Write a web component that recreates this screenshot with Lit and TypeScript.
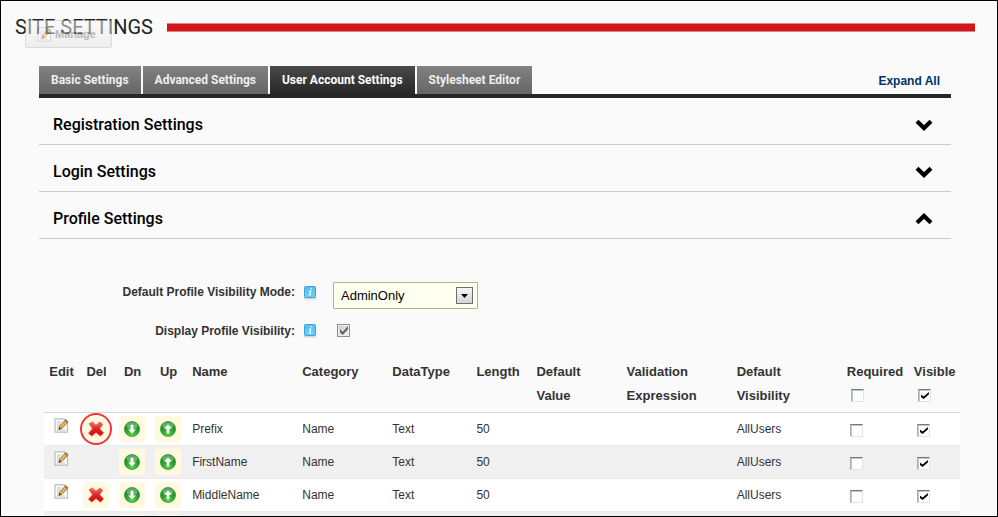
import { LitElement, html, css, svg, nothing } from "lit";
import { customElement, state } from "lit/decorators.js";

interface ProfileField {
  name: string;
  category: string;
  type: string;
  length: string;
  visibility: string;
  deletable: boolean;
  marked?: boolean;
}

const FIELDS: ProfileField[] = [
  { name: "Prefix", category: "Name", type: "Text", length: "50", visibility: "AllUsers", deletable: true, marked: true },
  { name: "FirstName", category: "Name", type: "Text", length: "50", visibility: "AllUsers", deletable: false },
  { name: "MiddleName", category: "Name", type: "Text", length: "50", visibility: "AllUsers", deletable: true },
  { name: "", category: "", type: "", length: "", visibility: "", deletable: false },
];

const TABS = ["Basic Settings", "Advanced Settings", "User Account Settings", "Stylesheet Editor"];

const pencilIcon = html`<svg width="15" height="15" viewBox="0 0 15 15" aria-hidden="true">
  <path d="M1 .8h9.2l3.3 3v10.4H1z" fill="#fbfbfb" stroke="#b9bcc0" stroke-width="1.2" />
  <path d="M3 4h4.5M3 6h3.5M3 8h2.5M3 10h1.5M3 12h8" stroke="#bcc2ca" fill="none" />
  <path d="M4.8 11.4l1-3.4 5.9-6.4 2.4 2.2-6 6.5z" fill="#e5b548" stroke="#86652a" stroke-width=".8" />
  <path d="M4.8 11.4l.7-2.4 1.7 1.6z" fill="#333" />
  <path d="M10.5 2.9l1.2-1.3 2.4 2.2-1.2 1.3z" fill="#8d8468" />
</svg>`;

const crossIcon = html`<svg width="18" height="18" viewBox="0 0 18 18" aria-hidden="true">
  <defs>
    <linearGradient id="r" x1="0" y1="0" x2="0" y2="1">
      <stop offset="0" stop-color="#f4786f" />
      <stop offset=".5" stop-color="#e3201f" />
      <stop offset="1" stop-color="#d8090c" />
    </linearGradient>
  </defs>
  <path
    d="M2.2 3.7L5.4 1.9 9 5.3l3.7-3.2 3 2.2-3.1 4.4 4 4.2-3.2 3.1L9 12.5l-4.2 3.6-3.3-2.8 4-4.6z"
    fill="url(#r)" stroke="#d4413c" stroke-width=".7" stroke-linejoin="round" />
</svg>`;

const arrowIcon = (up: boolean) => html`<svg width="16" height="16" viewBox="0 0 16 16" aria-hidden="true">
  <defs>
    <radialGradient id="g" cx=".5" cy=".85" r=".8">
      <stop offset="0" stop-color="#5fd04a" />
      <stop offset=".5" stop-color="#2ba52b" />
      <stop offset="1" stop-color="#188023" />
    </radialGradient>
  </defs>
  <circle cx="8" cy="8" r="7.6" fill="url(#g)" stroke="#258a2b" stroke-width=".6" />
  <ellipse cx="8" cy="4.6" rx="5.6" ry="3.6" fill="#fff" opacity=".3" />
  ${up
    ? svg`<path d="M8 3.4l3.9 4H9.4v4.8H6.6V7.4H4.1z" fill="#fff" />`
    : svg`<path d="M8 12.6l3.9-4H9.4V3.8H6.6v4.8H4.1z" fill="#fff" />`}
</svg>`;

const infoIcon = html`<svg width="14" height="15" viewBox="0 0 14 15" aria-hidden="true">
  <defs>
    <linearGradient id="b" x1="0" y1="0" x2="0" y2="1">
      <stop offset="0" stop-color="#5bbcf0" />
      <stop offset="1" stop-color="#6bd0f5" />
    </linearGradient>
  </defs>
  <rect x="1" y="12" width="12" height="2.6" rx="1" fill="#c9cccf" opacity=".8" />
  <rect x="1.5" y="1.5" width="11" height="11" rx="1" fill="url(#b)" stroke="#3aa2dd" />
  <path d="M7.6 3.6h1.2M6.2 6h1.5L6.8 10M5.8 10h2.1" stroke="#fff" stroke-width="1.2" fill="none" />
</svg>`;

const chevron = (up: boolean) => html`<svg width="18" height="12" viewBox="0 0 18 12" aria-hidden="true">
  <path d=${up ? "M2 9.7L9 3l7 6.7" : "M2 2.3L9 9l7-6.7"} fill="none" stroke="#000" stroke-width="4.2" />
</svg>`;

@customElement("app-root")
export class AppRoot extends LitElement {
  @state() private tab = 2;
  @state() private open = [false, false, true];

  static styles = css`
    :host {
      display: block;
      box-sizing: border-box;
      height: 100vh;
      overflow: hidden;
      border: 1px solid #000;
      background: #fafafa;
      color: #333;
      font: 12px/24px "Liberation Sans", Arial, sans-serif;
    }
    *, *::before, *::after { box-sizing: border-box; }
    button { font: inherit; color: inherit; margin: 0; padding: 0; border: 0; background: none; cursor: pointer; }
    svg { display: block; }
    .header {
      position: relative;
      display: flex;
      align-items: center;
      gap: 14px;
      height: 52px;
      padding: 0 22px 0 14px;
    }
    h1 { margin: 0; font: 400 20px/24px Roboto, sans-serif; color: #222; white-space: nowrap; }
    .rule { flex: 1; height: 9px; background: #d1171b; border: solid #e87f80; border-width: 1px 0; }
    .manage {
      position: absolute;
      left: 24px;
      top: 19px;
      display: flex;
      align-items: center;
      gap: 3px;
      width: 87px;
      height: 28px;
      padding-left: 11px;
      border: 1px solid #bbb;
      border-radius: 2px;
      background: linear-gradient(#fafafa, #e2e2e2);
      color: #777;
      font-weight: bold;
      font-size: 11px;
      opacity: .5;
    }
    .panel { margin: 13px 46px 0 38px; }
    .tabbar {
      display: flex;
      align-items: flex-end;
      gap: 2px;
      height: 32px;
      border-bottom: 4px solid #272727;
    }
    .tab {
      height: 28px;
      padding: 0 12px;
      background: linear-gradient(#818181, #666);
      color: #eee;
      font: bold 12px/28px Roboto, sans-serif;
      white-space: nowrap;
    }
    .tab.active { background: linear-gradient(#4a4a4a, #272727); color: #fff; }
    .expand { margin-left: auto; padding-right: 11px; color: #003366; font-weight: bold; text-decoration: none; line-height: 26px; }
    h2 { margin: 0; }
    .section {
      display: flex;
      align-items: center;
      justify-content: space-between;
      width: 100%;
      height: 47px;
      padding: 8px 18px 0 14px;
      border-bottom: 1px solid #ccc;
      color: #000;
      font: 500 16px/24px Roboto, sans-serif;
    }
    .form {
      display: grid;
      grid-template-columns: 258px 14px 1fr;
      column-gap: 7px;
      align-items: center;
      padding: 43px 0 0 37px;
    }
    .form label { text-align: right; font-weight: bold; padding-right: 1px; line-height: 20px; }
    .form .raised { align-self: start; }
    .info.raised { padding-top: 3px; }
    .pick { position: relative; width: 145px; margin-left: 9px; }
    select {
      display: block;
      appearance: none;
      width: 100%;
      height: 27px;
      padding: 0 24px 0 7px;
      border: 1px solid #b9b087;
      border-radius: 1px;
      background: #fffff0;
      color: #000;
      font: 13px/24px "Liberation Sans", Arial, sans-serif;
    }
    .drop {
      position: absolute;
      right: 5px;
      top: 5px;
      width: 17px;
      height: 17px;
      border: 1px solid #6e6e78;
      background: linear-gradient(#f6f6f6, #d4d4d4);
      pointer-events: none;
    }
    .show { display: flex; align-items: center; height: 43px; padding-left: 13px; }
    input {
      appearance: none;
      display: block;
      position: relative;
      width: 13px;
      height: 13px;
      margin: 0;
      border: 1px solid;
      border-color: #777 #e3e3e3 #e3e3e3 #bfa99a;
      background: #fff;
      box-shadow: inset 1px 1px 0 #b8c8dc;
    }
    input:checked::before {
      content: "";
      position: absolute;
      left: 2px;
      top: 2px;
      width: 8px;
      height: 7px;
      background: #000;
      clip-path: polygon(0 35%, 35% 65%, 100% 0, 100% 35%, 35% 100%, 0 70%);
    }
    input:disabled { border-color: #8e8f8f; background: linear-gradient(135deg, #ccc, #f2f2f2); box-shadow: inset 0 0 0 1px #f0f0f0; }
    input:disabled:checked::before { background: #666; top: 1px; height: 9px; }
    .grid { margin: 8px 37px 0 43px; }
    table { width: 100%; border-collapse: separate; border-spacing: 0; table-layout: fixed; }
    th, td { padding: 0 0 0 6px; text-align: left; vertical-align: middle; }
    th { height: 53px; font-size: 13px; line-height: 24px; vertical-align: top; border-bottom: 1px solid #d8d8d8; white-space: nowrap; }
    td { height: 33px; border-bottom: 1px solid #ececec; background: #fff; }
    tr:nth-child(even) td { background: #f0f0f0; }
    th.icon { padding: 0 0 0 1px; text-align: center; }
    td.icon { padding: 0; }
    td.edit { vertical-align: top; padding-top: 5px; }
    .edit button, .tile { display: flex; align-items: center; justify-content: center; margin: 0 auto; }
    .tile { position: relative; width: 26px; height: 26px; border-radius: 3px; background: #fff9e0; }
    .marked::after {
      content: "";
      position: absolute;
      left: -3px;
      top: -3px;
      width: 32px;
      height: 32px;
      border: 2px solid #f0353b;
      border-radius: 50%;
    }
    td input { margin: 3px 0 0 3px; }
    th input { margin: 5px 0 0 4px; }
    th label { display: block; }
    .c34 { width: 34px; } .c36 { width: 36px; } .c52 { width: 52px; } .c60 { width: 60px; }
    .c67 { width: 67px; } .c84 { width: 84px; } .c90 { width: 90px; } .c110 { width: 110px; }
  `;

  private toggle(i: number) {
    this.open = this.open.map((o, n) => (n === i ? !o : o));
  }

  private section(i: number, title: string) {
    return html`<h2>
      <button class="section" aria-expanded=${this.open[i]} @click=${() => this.toggle(i)}>
        ${title}${chevron(this.open[i])}
      </button>
    </h2>`;
  }

  private row(f: ProfileField) {
    return html`<tr>
      <td class="icon edit"><button aria-label="Edit ${f.name}">${pencilIcon}</button></td>
      <td class="icon">
        ${f.deletable
          ? html`<button class="tile ${f.marked ? "marked" : ""}" aria-label="Delete ${f.name}">${crossIcon}</button>`
          : nothing}
      </td>
      <td class="icon"><button class="tile" aria-label="Move ${f.name} down">${arrowIcon(false)}</button></td>
      <td class="icon"><button class="tile" aria-label="Move ${f.name} up">${arrowIcon(true)}</button></td>
      <td>${f.name}</td>
      <td>${f.category}</td>
      <td>${f.type}</td>
      <td>${f.length}</td>
      <td></td>
      <td></td>
      <td>${f.visibility}</td>
      <td><input type="checkbox" aria-label="${f.name} required" /></td>
      <td><input type="checkbox" checked aria-label="${f.name} visible" /></td>
    </tr>`;
  }

  private profile() {
    return html`
      <div class="form">
        <label class="raised" for="mode">Default Profile Visibility Mode:</label>
        <button class="info raised" aria-label="Help on visibility mode">${infoIcon}</button>
        <div class="pick">
          <select id="mode">
            <option>AdminOnly</option>
            <option>AllUsers</option>
            <option>MembersOnly</option>
          </select>
          <span class="drop"><svg width="15" height="15" viewBox="0 0 15 15"><path d="M4 6h7l-3.5 4z" fill="#000" /></svg></span>
        </div>
        <label for="display">Display Profile Visibility:</label>
        <button class="info" aria-label="Help on display">${infoIcon}</button>
        <div class="show"><input id="display" type="checkbox" checked disabled /></div>
      </div>
    `;
  }

  private table() {
    return html`<div class="grid">
      <table>
        <colgroup>
          <col class="c34" /><col class="c36" /><col class="c36" /><col class="c36" />
          <col class="c110" /><col class="c90" /><col class="c84" /><col class="c60" />
          <col class="c90" /><col class="c110" /><col class="c110" /><col class="c67" /><col class="c52" />
        </colgroup>
        <thead>
          <tr>
            <th class="icon">Edit</th>
            <th class="icon">Del</th>
            <th class="icon">Dn</th>
            <th class="icon">Up</th>
            <th>Name</th>
            <th>Category</th>
            <th>DataType</th>
            <th>Length</th>
            <th>Default<br />Value</th>
            <th>Validation<br />Expression</th>
            <th>Default<br />Visibility</th>
            <th><label for="req">Required</label><input id="req" type="checkbox" /></th>
            <th><label for="vis">Visible</label><input id="vis" type="checkbox" checked /></th>
          </tr>
        </thead>
        <tbody>
          ${FIELDS.map((f) => this.row(f))}
        </tbody>
      </table>
    </div>`;
  }

  render() {
    return html`
      <header class="header">
        <h1>SITE SETTINGS</h1>
        <div class="rule"></div>
        <button class="manage">${pencilIcon}Manage</button>
      </header>
      <div class="panel">
        <div class="tabbar" role="tablist">
          ${TABS.map(
            (t, i) => html`<button
              role="tab"
              class="tab ${i === this.tab ? "active" : ""}"
              aria-selected=${i === this.tab}
              @click=${() => (this.tab = i)}
            >${t}</button>`
          )}
          <a class="expand" href="#expand">Expand All</a>
        </div>
        ${this.section(0, "Registration Settings")}
        ${this.section(1, "Login Settings")}
        ${this.section(2, "Profile Settings")}
      </div>
      ${this.open[2] ? html`${this.profile()}${this.table()}` : nothing}
    `;
  }
}
